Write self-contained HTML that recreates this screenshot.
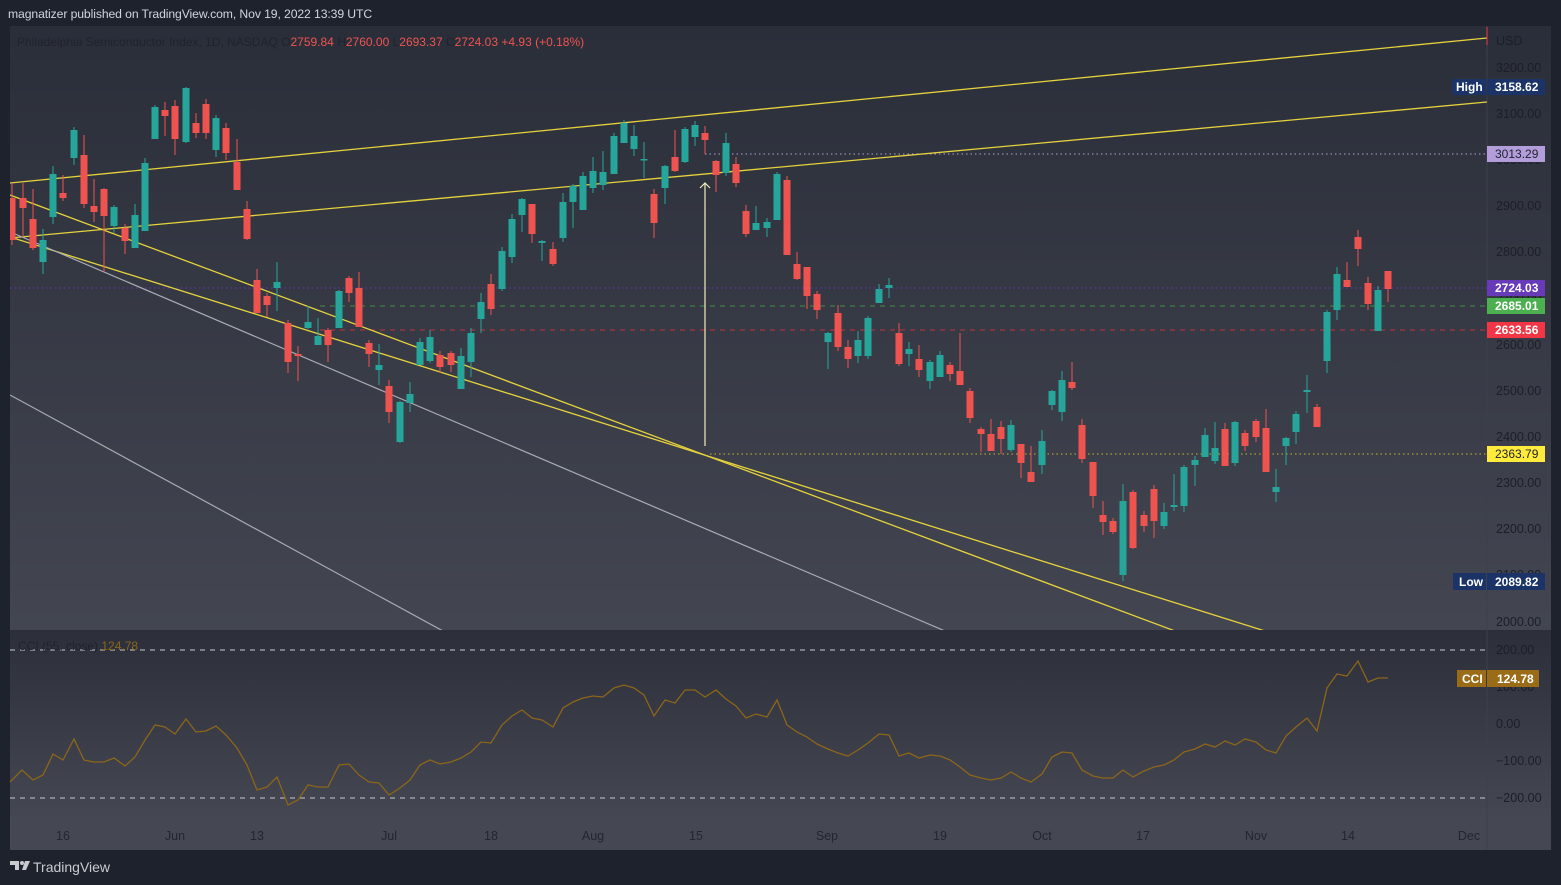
<!DOCTYPE html>
<html><head><meta charset="utf-8">
<style>
html,body{margin:0;padding:0;background:#1e222d;width:1561px;height:885px;overflow:hidden;font-family:"Liberation Sans",sans-serif;}
#hdr{position:absolute;left:8px;top:7px;font-size:12.2px;color:#d1d4dc;letter-spacing:-0.1px;}
svg text{font-family:"Liberation Sans",sans-serif;}
</style></head><body>
<div id="hdr">magnatizer published on TradingView.com, Nov 19, 2022 13:39 UTC</div>
<svg width="1561" height="885" style="position:absolute;left:0;top:0" id="s">
<defs>
<linearGradient id="g1" x1="0" y1="0" x2="0" y2="1"><stop offset="0" stop-color="#2a2e39"/><stop offset="1" stop-color="#434651"/></linearGradient>
<linearGradient id="g2" x1="0" y1="0" x2="0" y2="1"><stop offset="0" stop-color="#2c2f3a"/><stop offset="1" stop-color="#454853"/></linearGradient>
<clipPath id="cm"><rect x="10" y="26" width="1477" height="604"/></clipPath>
</defs>
<rect x="10" y="26" width="1541" height="604" fill="url(#g1)"/>
<rect x="10" y="630" width="1541" height="192" fill="url(#g2)"/>
<rect x="10" y="822" width="1541" height="28" fill="#454853"/>
<line x1="1487" y1="26" x2="1487" y2="850" stroke="#3d404a" stroke-width="1"/>
<g clip-path="url(#cm)" id="main">
<line x1="705" y1="154" x2="1487" y2="154" stroke="#b39ddb" stroke-dasharray="1.5,3" stroke-width="1"/>
<line x1="10" y1="288" x2="1487" y2="288" stroke="#5e3ab0" stroke-dasharray="1.5,3" stroke-width="1"/>
<line x1="320" y1="306" x2="1487" y2="306" stroke="#3f8f45" stroke-dasharray="5,5" stroke-width="1"/>
<line x1="320" y1="330" x2="1487" y2="330" stroke="#c0313d" stroke-dasharray="5,5" stroke-width="1"/>
<line x1="710" y1="454" x2="1487" y2="454" stroke="#c8b62e" stroke-dasharray="1.5,3" stroke-width="1"/>
<line x1="10" y1="183" x2="1487" y2="38" stroke="#e6d23c" stroke-width="1.3"/>
<line x1="10" y1="238" x2="1487" y2="102" stroke="#e6d23c" stroke-width="1.3"/>
<line x1="10" y1="195" x2="1175" y2="631" stroke="#e6d23c" stroke-width="1.3"/>
<line x1="10" y1="237" x2="1265" y2="631" stroke="#e6d23c" stroke-width="1.3"/>
<line x1="15" y1="234" x2="945" y2="631" stroke="#a9abb3" stroke-width="1.2"/>
<line x1="10" y1="395" x2="443" y2="631" stroke="#a9abb3" stroke-width="1.2"/>
<line x1="705" y1="183" x2="705" y2="446" stroke="#f3ecb8" stroke-width="1.2"/>
<polyline points="700,188 705,183 710,188" fill="none" stroke="#f3ecb8" stroke-width="1.2"/>
<g id="candles"></g>
</g>
<line x1="10" y1="650" x2="1487" y2="650" stroke="#c8cad0" stroke-dasharray="5,5" stroke-width="1"/>
<line x1="10" y1="798" x2="1487" y2="798" stroke="#c8cad0" stroke-dasharray="5,5" stroke-width="1"/>
<polyline id="cci" fill="none" stroke="#8c6519" stroke-width="1.3" points="10,782 22,770 33,780 43,775 53,754 63,760 74,739 84,760 94,762 104,762 114,758 125,766 135,757 145,740 155,725 165,727 175,734 186,719 196,732 206,731 216,726 226,735 237,748 247,765 257,790 267,787 277,777 288,805 298,800 308,785 318,787 328,787 339,765 349,764 359,775 369,782 379,783 389,795 400,788 410,780 420,765 430,760 440,764 451,762 461,758 471,752 481,742 491,743 502,725 512,716 522,710 532,718 542,720 553,727 563,708 573,702 583,698 593,696 603,697 614,688 624,685 634,688 644,695 654,716 665,700 675,703 685,690 695,690 705,697 716,690 726,699 736,706 746,718 756,714 767,717 777,700 787,725 797,732 807,737 817,744 828,749 838,753 848,756 858,750 868,743 879,734 889,735 899,756 909,753 919,758 930,755 940,756 950,760 960,767 970,775 981,778 991,780 1001,778 1011,772 1021,778 1031,782 1042,774 1052,757 1062,752 1072,753 1082,770 1093,776 1103,778 1113,778 1123,770 1133,777 1144,771 1154,767 1164,765 1174,760 1184,752 1195,749 1205,744 1215,747 1225,741 1235,745 1245,739 1256,742 1266,750 1276,753 1286,736 1296,727 1307,718 1317,731 1327,688 1337,674 1347,676 1358,661 1368,682 1378,678 1388,678"/>
<text x="17" y="46" font-size="12" fill="#20232b">Philadelphia Semiconductor Index, 1D, NASDAQ  O<tspan fill="#ef5350">2759.84</tspan>  H<tspan fill="#ef5350">2760.00</tspan>  L<tspan fill="#ef5350">2693.37</tspan>  C<tspan fill="#ef5350">2724.03</tspan> <tspan fill="#ef5350"> +4.93 (+0.18%)</tspan></text>
<text x="18" y="650" font-size="12" fill="#20232b">CCI (55, close) <tspan fill="#8c6519">124.78</tspan></text>
<g font-size="12.5" fill="#1c1f27">
<text x="1496" y="45">USD</text>
<text x="1496" y="72">3200.00</text>
<text x="1496" y="118">3100.00</text>
<text x="1496" y="164">3000.00</text>
<text x="1496" y="210">2900.00</text>
<text x="1496" y="256">2800.00</text>
<text x="1496" y="302">2700.00</text>
<text x="1496" y="349">2600.00</text>
<text x="1496" y="395">2500.00</text>
<text x="1496" y="441">2400.00</text>
<text x="1496" y="487">2300.00</text>
<text x="1496" y="533">2200.00</text>
<text x="1496" y="579">2100.00</text>
<text x="1496" y="626">2000.00</text>
<text x="1496" y="654">200.00</text>
<text x="1496" y="691">100.00</text>
<text x="1496" y="728">0.00</text>
<text x="1496" y="765">−100.00</text>
<text x="1496" y="802">−200.00</text>
</g>
<line x1="1487" y1="27" x2="1487" y2="45" stroke="#f23645" stroke-width="1"/>
<g font-size="12" font-weight="bold">
<rect x="1452" y="79" width="34" height="16" fill="#1b3366"/><text x="1456" y="91" fill="#fff">High</text>
<rect x="1487" y="79" width="58" height="16" fill="#1b3366"/><text x="1495" y="91" fill="#fff">3158.62</text>
<rect x="1487" y="146" width="58" height="16" fill="#b39ddb"/><text x="1495" y="158" fill="#1e222d" font-weight="normal">3013.29</text>
<rect x="1487" y="280" width="58" height="16" fill="#673ab7"/><text x="1495" y="292" fill="#fff">2724.03</text>
<rect x="1487" y="298" width="58" height="16" fill="#4caf50"/><text x="1495" y="310" fill="#fff">2685.01</text>
<rect x="1487" y="322" width="58" height="16" fill="#f23645"/><text x="1495" y="334" fill="#fff">2633.56</text>
<rect x="1487" y="446" width="58" height="16" fill="#ffeb3b"/><text x="1495" y="458" fill="#1e222d" font-weight="normal">2363.79</text>
<rect x="1453" y="573" width="33" height="17" fill="#1b3366"/><text x="1459" y="586" fill="#fff">Low</text>
<rect x="1487" y="573" width="58" height="17" fill="#1b3366"/><text x="1495" y="586" fill="#fff">2089.82</text>
<rect x="1457" y="670" width="29" height="17" fill="#9a6c18"/><text x="1462" y="683" fill="#fff">CCI</text>
<rect x="1487" y="670" width="52" height="17" fill="#9a6c18"/><text x="1497" y="683" fill="#fff">124.78</text>
</g>
<g font-size="12.5" fill="#23262f" text-anchor="middle">
<text x="63" y="840">16</text><text x="175" y="840">Jun</text><text x="257" y="840">13</text><text x="389" y="840">Jul</text><text x="491" y="840">18</text><text x="593" y="840">Aug</text><text x="696" y="840">15</text><text x="827" y="840">Sep</text><text x="940" y="840">19</text><text x="1042" y="840">Oct</text><text x="1143" y="840">17</text><text x="1256" y="840">Nov</text><text x="1348" y="840">14</text><text x="1469" y="840">Dec</text>
</g>
<g fill="#c8cad0">
<path d="M10 861 h9 v9 h-4 v-5 h-5z"/>
<circle cx="22" cy="863" r="2"/>
<path d="M25 861 h5 l-4 9 h-4z"/>
</g>
<text x="33" y="872" font-size="14" fill="#c8cad0">TradingView</text>
</svg>
<script>
var C=[[12,183,245,198,240,'r'],[23,183,237,198,208,'r'],[33,189,250,219,248,'r'],[43,229,274,240,262,'g'],[53,166,224,174,217,'g'],[63,175,201,193,198,'r'],[74,127,165,130,158,'g'],[84,135,208,155,204,'r'],[94,179,222,206,212,'r'],[104,188,272,189,216,'r'],[114,205,233,207,226,'g'],[125,224,254,228,241,'r'],[135,204,248,215,248,'g'],[145,158,231,163,231,'g'],[155,105,139,107,139,'g'],[165,102,136,110,116,'r'],[175,100,155,106,139,'r'],[186,87,143,88,142,'g'],[196,113,138,123,133,'r'],[206,99,139,104,133,'r'],[216,115,157,118,150,'g'],[226,123,160,128,153,'r'],[237,139,190,162,190,'r'],[247,201,240,209,239,'r'],[257,269,313,280,313,'r'],[267,293,317,296,305,'r'],[277,262,311,282,288,'g'],[288,320,373,323,362,'r'],[298,346,381,354,356,'r'],[308,306,329,322,328,'g'],[318,318,345,336,345,'g'],[328,328,362,330,345,'r'],[339,290,328,291,328,'g'],[349,276,302,278,293,'r'],[359,272,327,288,327,'r'],[369,340,367,343,354,'r'],[379,344,385,365,370,'g'],[389,380,423,386,412,'r'],[400,401,443,402,442,'g'],[410,382,412,394,403,'g'],[420,338,365,342,365,'g'],[430,330,363,337,361,'g'],[440,351,373,355,367,'r'],[451,351,372,353,365,'r'],[461,348,389,356,389,'g'],[471,328,377,333,362,'g'],[481,293,333,302,319,'g'],[491,274,315,284,309,'r'],[502,247,291,251,289,'g'],[512,214,263,219,257,'g'],[522,198,232,199,215,'g'],[532,204,243,204,234,'r'],[542,240,261,241,243,'g'],[553,242,266,249,264,'r'],[563,193,242,202,238,'g'],[573,184,228,186,202,'g'],[583,172,210,176,210,'g'],[593,157,193,171,188,'g'],[603,151,190,172,185,'g'],[614,133,174,136,174,'g'],[624,120,143,123,143,'g'],[634,125,156,136,149,'g'],[644,142,178,159,160,'g'],[654,189,238,194,223,'r'],[665,165,204,166,188,'g'],[675,130,172,157,171,'r'],[685,127,163,129,162,'g'],[695,121,146,125,137,'g'],[705,126,154,133,140,'r'],[716,160,192,161,175,'r'],[726,133,176,143,173,'g'],[736,157,187,164,183,'r'],[746,205,237,211,234,'r'],[756,206,230,223,230,'g'],[767,218,237,222,228,'g'],[777,172,220,174,220,'g'],[787,176,255,180,255,'r'],[797,252,280,264,279,'r'],[807,267,309,267,296,'r'],[817,291,319,294,310,'r'],[828,332,369,333,342,'g'],[838,305,351,313,347,'r'],[848,340,368,347,359,'r'],[858,331,363,340,356,'g'],[868,316,359,318,356,'g'],[879,284,303,289,303,'g'],[889,278,298,285,288,'g'],[899,323,366,333,364,'r'],[909,342,366,349,354,'g'],[919,345,377,359,370,'r'],[930,360,389,362,381,'g'],[940,351,377,355,377,'g'],[950,362,381,365,374,'r'],[960,333,385,371,385,'r'],[970,388,423,391,418,'r'],[981,427,452,429,434,'r'],[991,419,451,434,451,'r'],[1001,421,454,427,439,'r'],[1011,420,452,425,450,'g'],[1021,444,478,444,463,'r'],[1031,446,482,472,482,'r'],[1042,430,474,441,465,'g'],[1052,390,410,391,405,'g'],[1062,371,421,380,412,'g'],[1072,362,390,382,388,'r'],[1082,419,463,425,459,'r'],[1093,462,508,462,496,'r'],[1103,501,535,515,522,'r'],[1113,518,534,521,532,'r'],[1123,484,581,501,575,'g'],[1133,490,549,492,548,'r'],[1144,511,532,515,526,'r'],[1154,485,538,489,521,'r'],[1164,503,529,512,526,'g'],[1174,474,511,505,507,'g'],[1184,465,512,467,506,'g'],[1195,456,486,460,465,'g'],[1205,428,457,435,457,'g'],[1215,422,464,448,461,'g'],[1225,423,466,429,466,'r'],[1235,421,466,422,463,'g'],[1245,430,451,433,446,'r'],[1256,419,442,421,437,'r'],[1266,409,472,428,472,'r'],[1276,469,502,487,492,'g'],[1286,437,465,438,446,'g'],[1296,411,444,414,432,'g'],[1307,375,413,390,392,'g'],[1317,404,427,407,427,'r'],[1327,310,373,312,361,'g'],[1337,267,320,274,310,'g'],[1347,262,287,280,287,'r'],[1358,230,266,237,249,'r'],[1368,277,310,283,304,'r'],[1378,286,331,290,331,'g'],[1388,271,302,271,289,'r']];
var ns="http://www.w3.org/2000/svg",g=document.getElementById('candles');
C.forEach(function(c){var col=c[5]=='g'?'#26a69a':'#ef5350';
var l=document.createElementNS(ns,'rect');l.setAttribute('x',c[0]-0.5);l.setAttribute('y',c[1]);l.setAttribute('width',1);l.setAttribute('height',c[2]-c[1]);l.setAttribute('fill',col);g.appendChild(l);
var b=document.createElementNS(ns,'rect');b.setAttribute('x',c[0]-3.5);b.setAttribute('y',c[3]);b.setAttribute('width',7);b.setAttribute('height',Math.max(1.5,c[4]-c[3]));b.setAttribute('fill',col);g.appendChild(b);});
</script>
</body></html>
